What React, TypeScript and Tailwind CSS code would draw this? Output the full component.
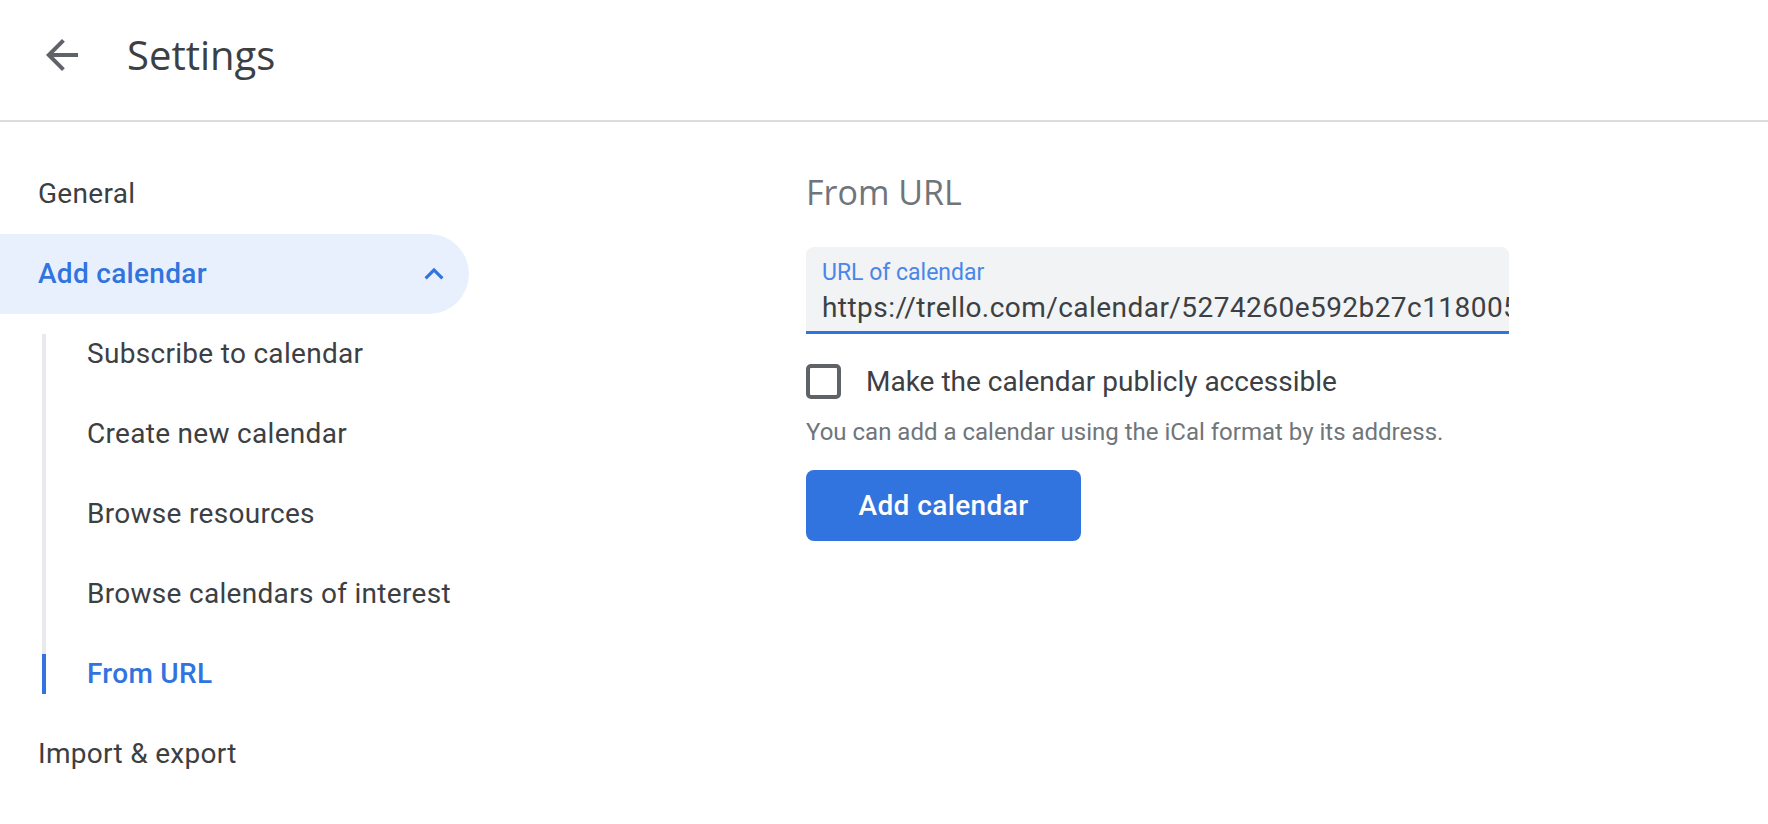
import React from "react";

const navText = "text-[28px] tracking-[0.3px] text-[#3c4043]";

function SubItem({ label, active }: { label: string; active?: boolean }) {
  return (
    <div className="relative flex h-[80px] items-center pl-[41px]">
      {active && (
        <div className="absolute left-[-4px] top-[20px] h-[40px] w-[4px] bg-[#3174df]" />
      )}
      <span
        className={
          active
            ? "text-[28px] font-medium tracking-[0.3px] text-[#3174df]"
            : navText
        }
      >
        {label}
      </span>
    </div>
  );
}

export default function App() {
  return (
    <div
      className="min-h-screen bg-white"
      style={{ fontFamily: "Roboto, 'Liberation Sans', sans-serif" }}
    >
      {/* Header */}
      <header className="flex h-[122px] items-center border-b-2 border-[#dadce0] pb-[10px]">
        <button className="ml-[38px] flex h-[48px] w-[48px] items-center justify-center">
          <svg width="48" height="48" viewBox="0 0 24 24" fill="#5f6368">
            <path d="M20 11H7.83l5.59-5.59L12 4l-8 8 8 8 1.41-1.41L7.83 13H20v-2z" />
          </svg>
        </button>
        <h1
          className="ml-[41px] text-[40px] leading-[52px] text-[#3c4043]"
          style={{ fontFamily: "'Open Sans', sans-serif" }}
        >
          Settings
        </h1>
      </header>

      <div className="flex">
        {/* Left nav */}
        <nav className="w-[469px] shrink-0 pt-[32px]">
          <div className="flex h-[80px] items-center pl-[38px]">
            <span className={navText}>General</span>
          </div>
          <div className="flex h-[80px] items-center justify-between rounded-r-full bg-[#e8f0fe] pl-[38px] pr-[16px]">
            <span className="text-[28px] font-medium tracking-[0.3px] text-[#3174df]">
              Add calendar
            </span>
            <svg width="38" height="38" viewBox="0 0 24 24" fill="#3174df">
              <path d="M12 8l-6 6 1.41 1.41L12 10.83l4.59 4.58L18 14z" />
            </svg>
          </div>
          <div className="ml-[42px] my-[20px] flex flex-col border-l-4 border-[#e8eaed]">
            <div className="-my-[20px]">
              <SubItem label="Subscribe to calendar" />
              <SubItem label="Create new calendar" />
              <SubItem label="Browse resources" />
              <SubItem label="Browse calendars of interest" />
              <SubItem label="From URL" active />
            </div>
          </div>
          <div className="flex h-[80px] items-center pl-[38px]">
            <span className={navText}>Import &amp; export</span>
          </div>
        </nav>

        {/* Content */}
        <main className="ml-[337px] pt-[46px]">
          <h2
            className="text-[34px] leading-[48px] text-[#70757a]"
            style={{ fontFamily: "'Open Sans', sans-serif" }}
          >
            From URL
          </h2>

          <div className="mt-[31px] flex h-[87px] w-[703px] flex-col overflow-hidden rounded-t-[8px] border-b-[3px] border-[#3174df] bg-[#f1f3f4] pl-[16px] pt-[12px]">
            <span className="text-[23px] leading-[28px] text-[#4a86e8]">
              URL of calendar
            </span>
            <div className="mt-[3px] whitespace-nowrap text-[28px] leading-[36px] tracking-[0.45px] text-[#3c4043]">
              https://trello.com/calendar/5274260e592b27c118005b8f/6a1c2d3e4b5f/8c7a2e1d0f9b3a6c4e2d.ics
            </div>
          </div>

          <div className="mt-[30px] flex h-[35px] items-center">
            <div className="h-[35px] w-[35px] rounded-[5px] border-[4px] border-[#5f6368]" />
            <span className="ml-[25px] text-[28px] text-[#3c4043]">
              Make the calendar publicly accessible
            </span>
          </div>

          <p className="mt-[17px] text-[24px] leading-[32px] text-[#70757a]">
            You can add a calendar using the iCal format by its address.
          </p>

          <button className="mt-[22px] flex h-[71px] w-[275px] items-center justify-center rounded-[8px] bg-[#3174df] text-[28px] font-medium tracking-[0.4px] text-white">
            Add calendar
          </button>
        </main>
      </div>
    </div>
  );
}
